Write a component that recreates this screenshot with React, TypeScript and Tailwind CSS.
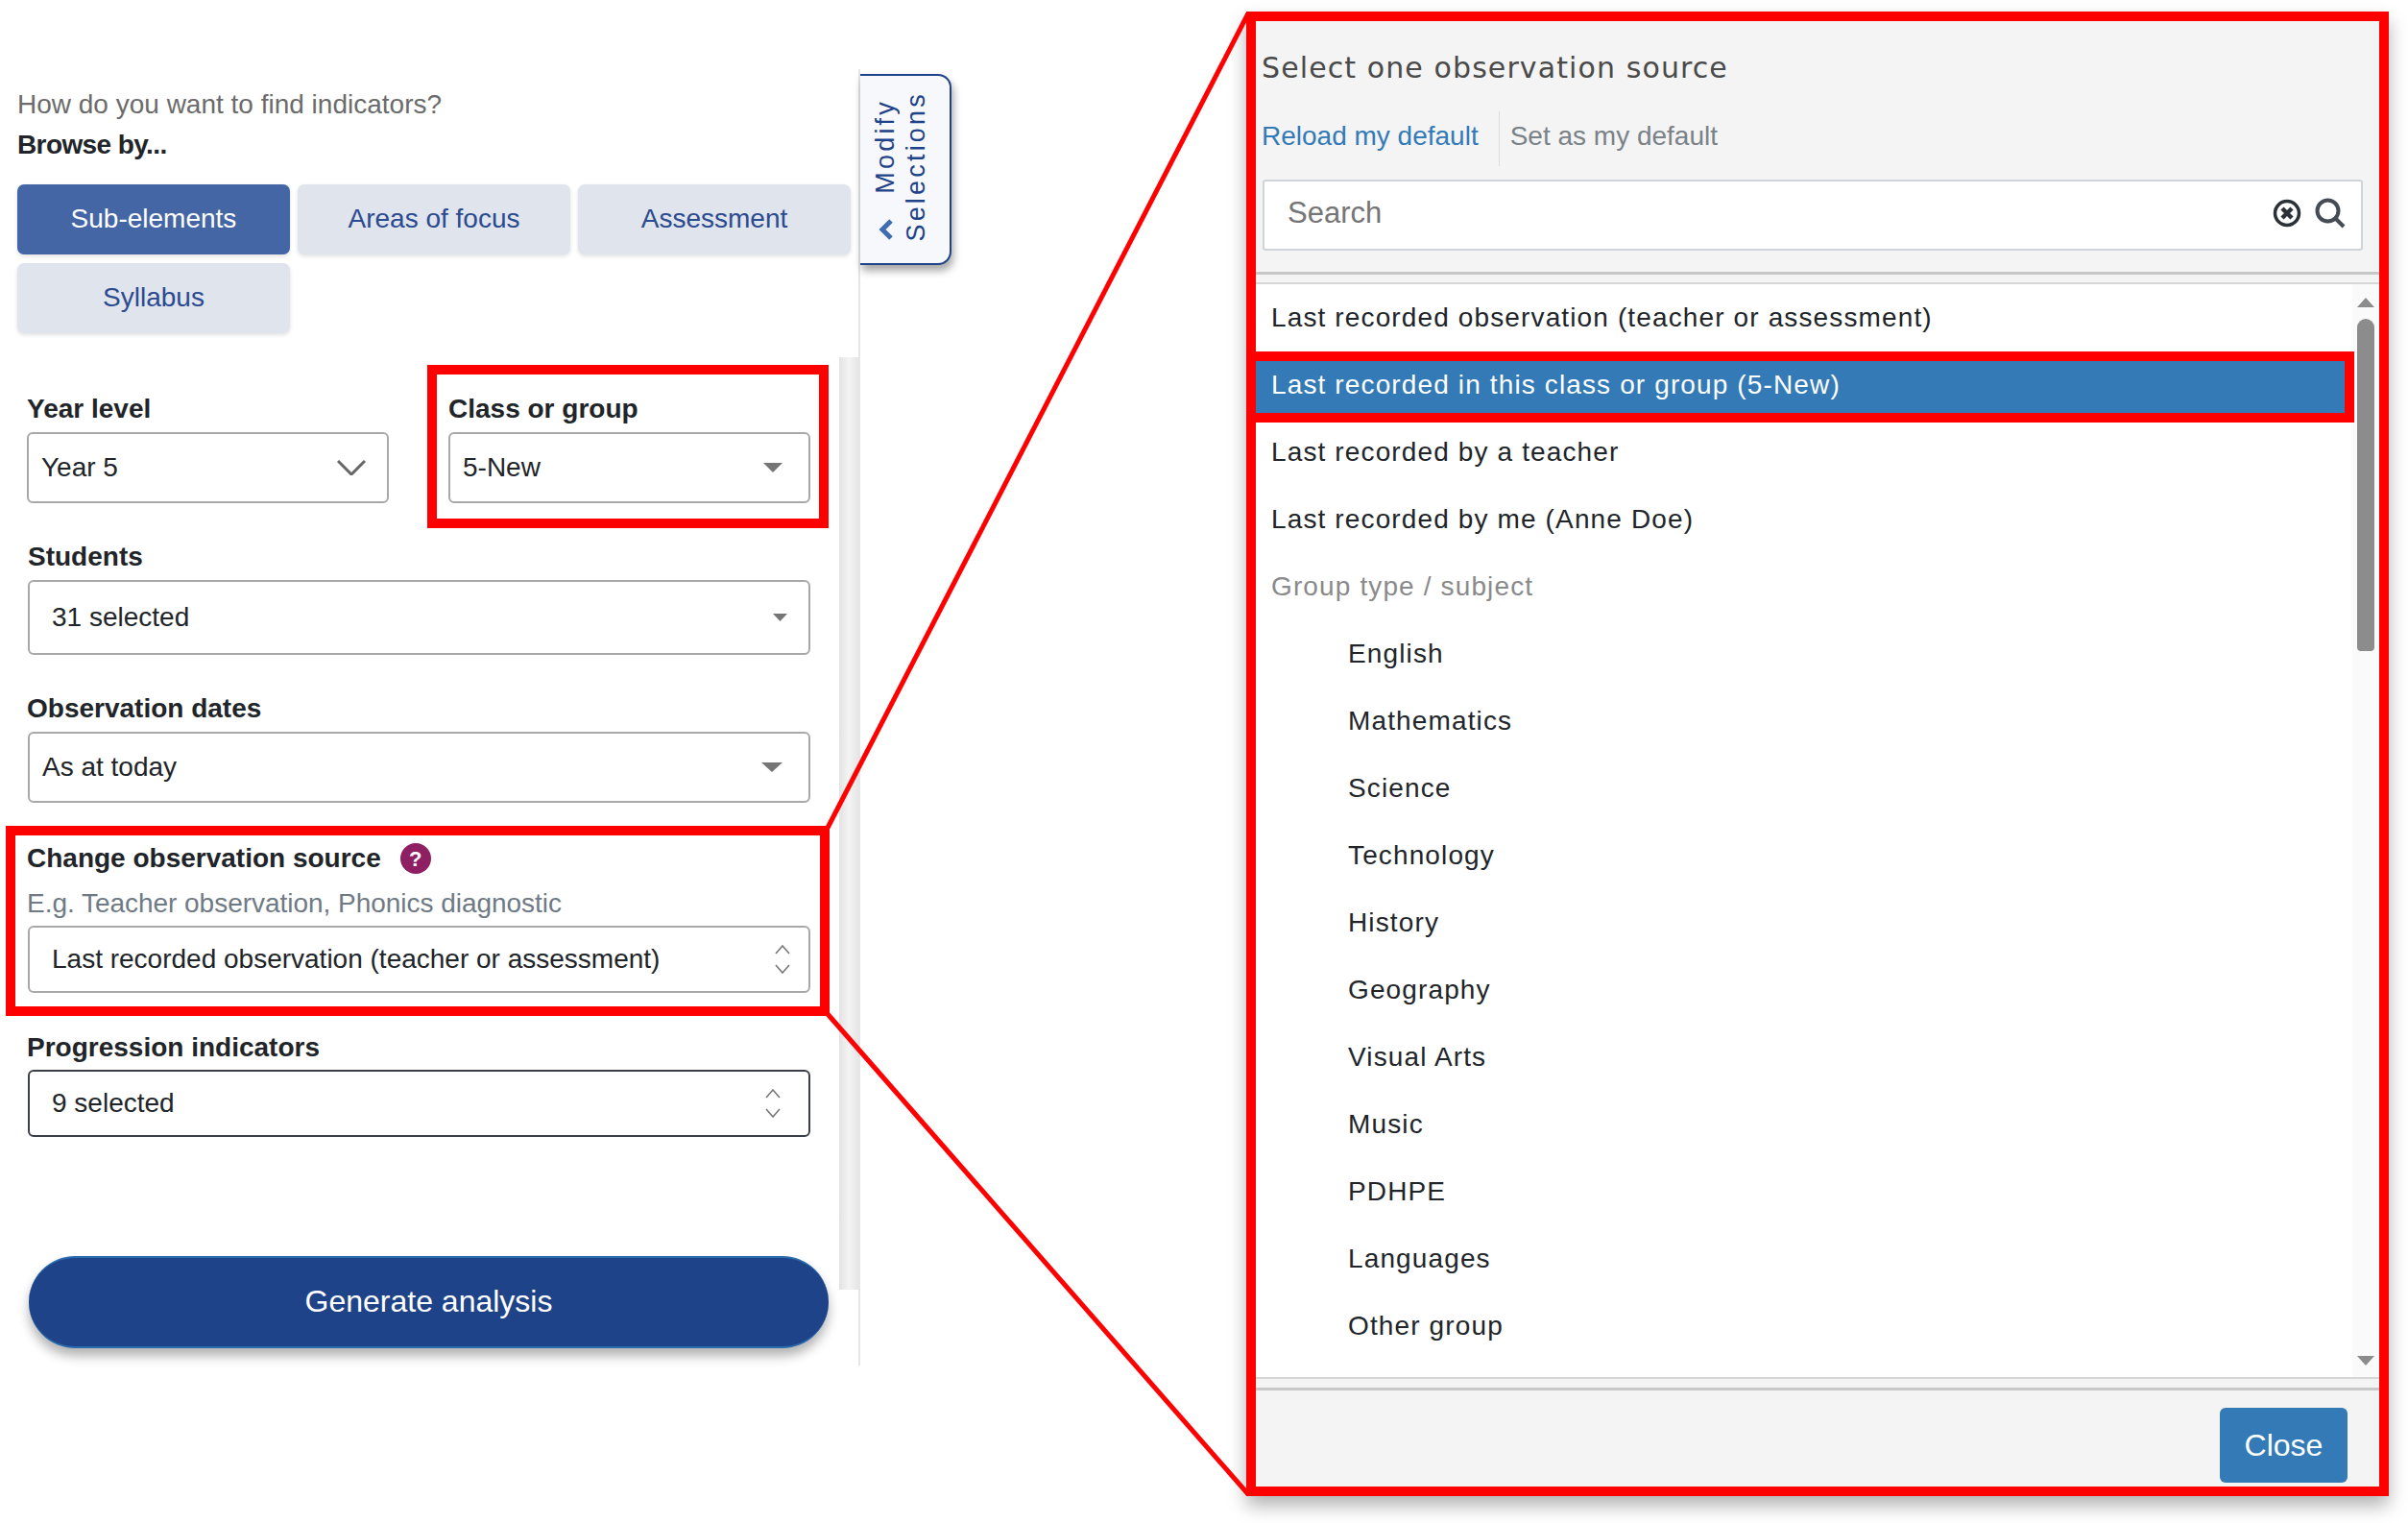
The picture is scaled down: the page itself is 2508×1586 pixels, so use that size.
import React from 'react';

const sources = ['English', 'Mathematics', 'Science', 'Technology', 'History', 'Geography', 'Visual Arts', 'Music', 'PDHPE', 'Languages', 'Other group'];

const Caret = ({ className }: { className: string }) => (
  <svg viewBox="0 0 20 10" className={className} preserveAspectRatio="none">
    <path d="M0 0 H20 L10 10 Z" fill="#757575" />
  </svg>
);

const UpDown = ({ className }: { className: string }) => (
  <svg viewBox="0 0 18 30" className={className} fill="none" stroke="#777" strokeWidth="1.6">
    <path d="M2 9 L9 1 L16 9" />
    <path d="M2 21 L9 29 L16 21" />
  </svg>
);

const Pick = ({ children, dark, h }: { children: React.ReactNode; dark?: boolean; h: string }) => (
  <div
    className={`flex items-center justify-between rounded-[6px] border-2 bg-white ${h} ${dark ? 'border-[#3a3f47]' : 'border-[#a8a8a8]'}`}
  >
    {children}
  </div>
);

const Field = ({ children }: { children: React.ReactNode }) => (
  <div className="text-[28px] leading-[32px] font-bold text-[#212529]">{children}</div>
);

const BrowseButton = ({ children, active }: { children: React.ReactNode; active?: boolean }) => (
  <button
    className={`h-[73px] rounded-[7px] text-[28px] pb-[1px] shadow-[0_2px_4px_rgba(0,0,0,0.12)] ${active ? 'bg-[#4466a5] text-white' : 'bg-[#dfe4ed] text-[#2b4a8f]'}`}
  >
    {children}
  </button>
);

export default function App() {
  return (
    <div className="flex w-[2508px] h-[1586px] bg-white relative overflow-hidden [font-family:Liberation_Sans,Arial,sans-serif]">
      {/* left panel */}
      <div className="w-[896px] h-[1350px] mt-[72px] shrink-0 border-r-2 border-[#e6e6e6] flex flex-col">
        <div className="pl-[18px] pt-[19px]">
          <div className="text-[28px] leading-[36px] text-[#6b6b6b]">How do you want to find indicators?</div>
          <div className="text-[28px] leading-[36px] mt-[6px] font-bold text-[#212529] tracking-[-0.6px]">Browse by...</div>
          <div className="grid grid-cols-[284px_284px_284px] gap-x-[8px] gap-y-[9px] mt-[23px]">
            <BrowseButton active>Sub-elements</BrowseButton>
            <BrowseButton>Areas of focus</BrowseButton>
            <BrowseButton>Assessment</BrowseButton>
            <BrowseButton>Syllabus</BrowseButton>
          </div>
        </div>

        <div className="flex mt-[25px] flex-1 min-h-0">
          <div className="w-[874px] shrink-0 pl-[28px] pt-[38px]">
            <div className="flex gap-[62px]">
              <div className="w-[377px]">
                <Field>Year level</Field>
                <div className="mt-[8px]">
                  <Pick h="h-[74px]">
                    <span className="ml-[13px] text-[28px] text-[#212529]">Year 5</span>
                    <svg viewBox="0 0 30 16" className="w-[30px] h-[16px] mr-[22px]" fill="none" stroke="#666" strokeWidth="3">
                      <path d="M1 1 L15 15 L29 1" />
                    </svg>
                  </Pick>
                </div>
              </div>
              <div className="w-[377px] relative">
                <Field>Class or group</Field>
                <div className="mt-[8px]">
                  <Pick h="h-[74px]">
                    <span className="ml-[13px] text-[28px] text-[#212529]">5-New</span>
                    <Caret className="w-[20px] h-[10px] mr-[27px]" />
                  </Pick>
                </div>
                <div className="absolute left-[-22px] right-[-19px] top-[-30px] bottom-[-26px] border-[10px] border-[#ff0000]" />
              </div>
            </div>

            <div className="mt-[40px] pl-[1px]">
              <Field>Students</Field>
            </div>
            <div className="mt-[8px] w-[815px] ml-[1px]">
              <Pick h="h-[78px]">
                <span className="ml-[23px] text-[28px] text-[#212529]">31 selected</span>
                <Caret className="w-[15px] h-[8px] mr-[22px]" />
              </Pick>
            </div>

            <div className="mt-[40px]">
              <Field>Observation dates</Field>
            </div>
            <div className="mt-[8px] w-[815px] ml-[1px]">
              <Pick h="h-[74px]">
                <span className="ml-[13px] text-[28px] text-[#212529]">As at today</span>
                <Caret className="w-[22px] h-[10px] mr-[27px]" />
              </Pick>
            </div>

            <div className="relative w-[815px] ml-[1px] mt-[42px]">
              <div className="flex items-center gap-[20px] h-[32px] -ml-[1px]">
                <Field>Change observation source</Field>
                <span className="w-[32px] h-[32px] rounded-full bg-[#8f1f63] text-white text-[22px] font-bold flex items-center justify-center">?</span>
              </div>
              <div className="mt-[16px] -ml-[1px] text-[28px] leading-[30px] tracking-[-0.03px] text-[#6f7a85]">E.g. Teacher observation, Phonics diagnostic</div>
              <div className="mt-[8px]">
                <Pick h="h-[70px]">
                  <span className="ml-[23px] text-[28px] text-[#212529]">Last recorded observation (teacher or assessment)</span>
                  <UpDown className="w-[18px] h-[30px] mr-[18px]" />
                </Pick>
              </div>
              <div className="absolute left-[-23px] right-[-20px] top-[-18px] bottom-[-24px] border-[10px] border-[#ff0000]" />
            </div>

            <div className="mt-[41px]">
              <Field>Progression indicators</Field>
            </div>
            <div className="mt-[7px] w-[815px] ml-[1px]">
              <Pick h="h-[70px]" dark>
                <span className="ml-[23px] text-[28px] text-[#212529]">9 selected</span>
                <UpDown className="w-[18px] h-[30px] mr-[28px]" />
              </Pick>
            </div>

            <button className="mt-[124px] ml-[2px] w-[833px] h-[96px] pb-[2px] rounded-full bg-[#1f4388] border-y-2 border-[#2a6cb0] text-white text-[32px] shadow-[0_8px_12px_rgba(0,0,0,0.3)]">
              Generate analysis
            </button>
          </div>
          {/* scroll track */}
          <div className="w-[21px] h-[971px] bg-gradient-to-r from-[#e2e2e2] via-[#f4f4f4] to-[#e6e6e6]" />
        </div>
      </div>

      {/* modify selections tab */}
      <div className="w-[95px] h-[199px] mt-[77px] shrink-0 flex rounded-r-[14px] border-y-2 border-r-2 border-[#1f4388] bg-[#f6f8fb] shadow-[2px_6px_8px_rgba(0,0,0,0.35)] text-[27px] leading-[30px] text-[#1f4388] tracking-[3.2px]">
        <div className="w-[44px] ml-[4px] flex flex-col-reverse items-center pb-[24px]">
          <svg viewBox="0 0 15 22" className="w-[15px] h-[22px] shrink-0" fill="none" stroke="#3f6eb0" strokeWidth="5">
            <path d="M13 2 L4 11 L13 20" />
          </svg>
          <span className="[writing-mode:vertical-rl] rotate-180 mb-[26px]">Modify</span>
        </div>
        <div className="w-[20px] flex flex-col-reverse items-center pb-[22px]">
          <span className="[writing-mode:vertical-rl] rotate-180">Selections</span>
        </div>
      </div>

      {/* observation source modal */}
      <div className="ml-[307px] mt-[12px] w-[1190px] h-[1546px] shrink-0 border-[10px] border-[#ff0000] bg-[#f4f4f4] flex flex-col shadow-[0_10px_18px_rgba(0,0,0,0.3)]">
        <div className="pl-[6px] pt-[34px] text-[30px] leading-[30px] tracking-[1.1px] text-[#4a4a4a] [font-family:DejaVu_Sans,sans-serif]">Select one observation source</div>
        <div className="flex pl-[6px] mt-[30px] h-[57px] text-[28px] items-center">
          <span className="text-[#337ab7] mb-[6px]">Reload my default</span>
          <span className="ml-[21px] h-[57px] w-[1px] bg-[#dcdcdc]" />
          <span className="ml-[11px] text-[#7a8288] mb-[6px]">Set as my default</span>
        </div>
        <div className="ml-[7px] mt-[14px] w-[1146px] h-[74px] border-2 border-[#ced4da] rounded-[3px] bg-white flex items-center pl-[24px] pr-[16px] pb-[4px]">
          <span className="flex-1 text-[31px] text-[#757575]">Search</span>
          <svg viewBox="0 0 30 30" className="w-[30px] h-[30px]" fill="none">
            <circle cx="15" cy="15" r="12.5" stroke="#2c3138" strokeWidth="3.5" />
            <path d="M10 10 L20 20 M20 10 L10 20" stroke="#2c3138" strokeWidth="4.5" />
          </svg>
          <svg viewBox="0 0 32 32" className="w-[32px] h-[32px] ml-[14px]" fill="none" stroke="#454c55" strokeWidth="4">
            <circle cx="13.5" cy="13.5" r="11" />
            <path d="M22 22 L30 30" />
          </svg>
        </div>
        <div className="mt-[22px] h-[3px] bg-[#c8c8c8] shrink-0" />
        <div className="mt-[8px] h-[1142px] shrink-0 flex bg-white border-y-2 border-[#d6d6d6]">
          <div className="w-[1142px] pt-[2px] text-[28px] text-[#212529] tracking-[1.13px]">
            <div className="h-[70px] flex items-center pl-[16px] pb-[5px]">Last recorded observation (teacher or assessment)</div>
            <div className="relative h-[70px] flex items-center pl-[16px] pb-[5px] bg-[#337ab7] text-white">
              Last recorded in this class or group (5-New)
              <div className="absolute left-[-10px] right-[-2px] top-[-2px] bottom-[-2px] border-[10px] border-[#ff0000]" />
            </div>
            <div className="h-[70px] flex items-center pl-[16px] pb-[5px]">Last recorded by a teacher</div>
            <div className="h-[70px] flex items-center pl-[16px] pb-[5px]">Last recorded by me (Anne Doe)</div>
            <div className="h-[70px] flex items-center pl-[16px] pb-[5px] text-[#8a8a8a]">Group type / subject</div>
            {sources.map((source) => (
              <div key={source} className="h-[70px] flex items-center pl-[96px] pb-[5px]">{source}</div>
            ))}
          </div>
          <div className="flex-1 bg-[#fafafa] flex flex-col items-center pt-[14px] pb-[12px]">
            <svg viewBox="0 0 18 10" className="w-[18px] h-[10px] shrink-0"><path d="M0 10 H18 L9 0 Z" fill="#8c8c8c" /></svg>
            <div className="w-[18px] h-[346px] mt-[12px] rounded-t-[9px] rounded-b-[4px] bg-[#8c8c8c]" />
            <svg viewBox="0 0 18 10" className="w-[18px] h-[10px] mt-auto"><path d="M0 0 H18 L9 10 Z" fill="#8c8c8c" /></svg>
          </div>
        </div>
        <div className="mt-[9px] h-[3px] bg-[#c8c8c8] shrink-0" />
        <div className="flex-1 flex justify-end items-end pr-[33px] pb-[4px]">
          <button className="w-[133px] h-[78px] rounded-[6px] bg-[#337ab7] text-white text-[32px]">Close</button>
        </div>
      </div>

      {/* red connector lines between the callouts */}
      <svg className="absolute left-0 top-0 pointer-events-none" width="2508" height="1586" fill="none" stroke="#ff0000" strokeWidth="5">
        <path d="M862 862 L1300 14" />
        <path d="M862 1056 L1300 1556" />
      </svg>
    </div>
  );
}
